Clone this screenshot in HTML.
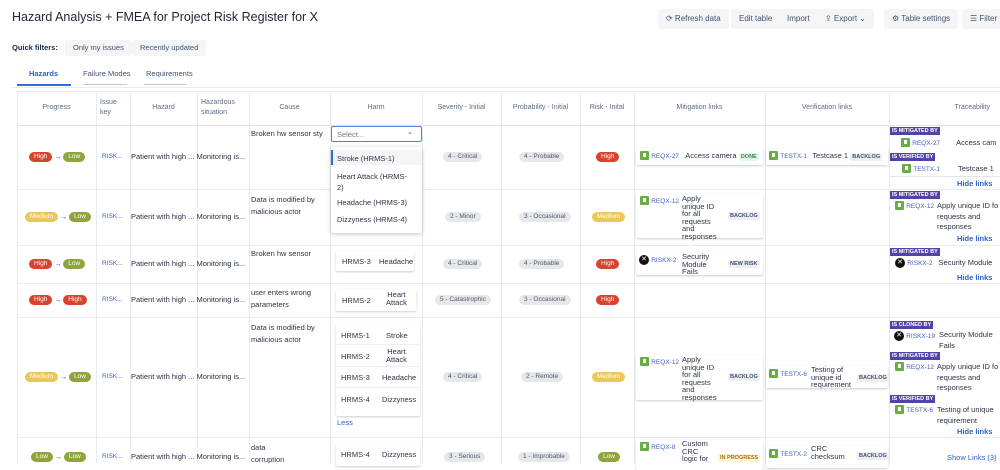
<!DOCTYPE html><html><head><style>
*{box-sizing:border-box;margin:0;padding:0}
body{width:1000px;height:463px;overflow:hidden;background:#fff;font-family:"Liberation Sans",sans-serif;color:#172b4d;position:relative;font-size:8px;line-height:1.25}
.a{position:absolute;white-space:nowrap}
.vl{position:absolute;top:91px;bottom:0;width:1px;background:#e8eaee}
.hl{position:absolute;left:17px;right:0;height:1px;background:#e8eaee}
.btn{position:absolute;top:9px;height:20px;background:#f4f5f7;border-radius:3px;font-size:8px;color:#42526e;line-height:20px;padding:0 8px;white-space:nowrap}
.th{position:absolute;top:91px;height:34px;font-size:7px;color:#5e6c84;display:flex;align-items:center;justify-content:center;text-align:center;line-height:10px}
.pp{line-height:10px;font-size:7px}
.p{display:inline-block;border-radius:8px;font-size:6.5px;color:#fff;padding:0 5px;height:10px;line-height:10px;vertical-align:middle}
.H{background:#d8432e}.L{background:#8ea53b}.M{background:#e9c75c}
.g{position:absolute;background:#e5e7eb;color:#505866;font-size:6.5px;border-radius:6px;height:10px;line-height:10px;padding:0 5px;white-space:nowrap}
.t{font-size:7.5px;color:#2b3445}
.k{font-size:6.5px;color:#3d62c4}
.card{position:absolute;background:#fff;box-shadow:0 1px 2px rgba(0,0,0,.2);border-radius:2px}
.ic{display:inline-block;width:9px;height:9px;background:#6bad45;border-radius:1px;vertical-align:middle;position:relative}
.ic:after{content:"";position:absolute;left:3px;top:2px;width:3px;height:4px;background:#fff}
.ix{display:inline-block;width:10px;height:10px;background:#111;border-radius:50%;vertical-align:middle;color:#fff;font-size:7px;text-align:center;line-height:10px}
.st{font-size:5.5px;font-weight:bold;color:#42526e;background:#eceef1;padding:1px 2px;border-radius:2px}
.lab{position:absolute;background:#5243aa;color:#fff;font-size:5.5px;font-weight:bold;padding:0 2px;height:8px;line-height:8px;white-space:nowrap}
.hide{position:absolute;font-size:7.5px;color:#2d5fc7;font-weight:bold;white-space:nowrap}
</style></head><body>
<div class="a" style="left:12px;top:10px;font-size:12.5px;color:#1d2536">Hazard Analysis + FMEA for Project Risk Register for X</div>
<div class="btn" style="left:658px">⟳ Refresh data</div>
<div class="btn" style="left:731px">Edit table</div>
<div class="btn" style="left:779px">Import</div>
<div class="btn" style="left:817px">⇪ Export ⌄</div>
<div class="btn" style="left:884px">⚙ Table settings</div>
<div class="btn" style="left:962px">☰ Filter</div>
<div class="a" style="left:12px;top:43px;font-size:7.5px;font-weight:bold;color:#172b4d">Quick filters:</div>
<div class="btn" style="left:65px;top:40px;height:16px;line-height:16px;font-size:7.5px">Only my issues</div>
<div class="btn" style="left:132px;top:40px;height:16px;line-height:16px;font-size:7.5px">Recently updated</div>
<div class="a" style="left:29px;top:69px;font-size:7.5px;color:#2d5fc7;font-weight:bold">Hazards</div>
<div class="a" style="left:17px;top:84px;width:54px;height:2px;background:#2d6fe0"></div>
<div class="a" style="left:83px;top:69px;font-size:7.5px;color:#42526e">Failure Modes</div>
<div class="a" style="left:83px;top:84px;width:44px;height:1px;background:#c5cbd6"></div>
<div class="a" style="left:146px;top:69px;font-size:7.5px;color:#42526e">Requirements</div>
<div class="a" style="left:144px;top:84px;width:43px;height:1px;background:#c5cbd6"></div>
<div class="a" style="left:12px;top:87px;right:0;height:1px;background:#ebecf0"></div>

<div class="hl" style="top:91px"></div><div class="hl" style="top:125px;background:#dfe1e6"></div><div class="hl" style="top:189px"></div><div class="hl" style="top:245px"></div><div class="hl" style="top:283px"></div><div class="hl" style="top:317px"></div><div class="hl" style="top:437px"></div>
<div class="vl" style="left:17px"></div><div class="vl" style="left:96px"></div><div class="vl" style="left:130px"></div><div class="vl" style="left:197px"></div><div class="vl" style="left:249px"></div><div class="vl" style="left:330px"></div><div class="vl" style="left:422px"></div><div class="vl" style="left:501px"></div><div class="vl" style="left:580px"></div><div class="vl" style="left:634px"></div><div class="vl" style="left:765px"></div><div class="vl" style="left:889px"></div>

<div class="th" style="left:17px;width:79px">Progress</div>
<div class="th" style="left:96px;width:34px;justify-content:flex-start;padding-left:4px;text-align:left">Issue<br>key</div>
<div class="th" style="left:130px;width:67px">Hazard</div>
<div class="th" style="left:197px;width:52px;justify-content:flex-start;padding-left:4px;text-align:left">Hazardous<br>situation</div>
<div class="th" style="left:249px;width:81px">Cause</div>
<div class="th" style="left:330px;width:92px">Harm</div>
<div class="th" style="left:422px;width:79px">Severity - Initial</div>
<div class="th" style="left:501px;width:79px">Probability - Initial</div>
<div class="th" style="left:580px;width:54px">Risk - Inital</div>
<div class="th" style="left:634px;width:131px">Mitigation links</div>
<div class="th" style="left:765px;width:124px">Verification links</div>
<div class="th" style="left:889px;width:111px;justify-content:flex-end;padding-right:10px">Traceability</div>

<div class="a pp" style="left:29px;top:152px"><span class="p H">High</span> → <span class="p L">Low</span></div>
<div class="a pp" style="left:25px;top:212px"><span class="p M">Medium</span> → <span class="p L">Low</span></div>
<div class="a pp" style="left:29px;top:259px"><span class="p H">High</span> → <span class="p L">Low</span></div>
<div class="a pp" style="left:29px;top:295px"><span class="p H">High</span> → <span class="p H">High</span></div>
<div class="a pp" style="left:25px;top:372px"><span class="p M">Medium</span> → <span class="p L">Low</span></div>
<div class="a pp" style="left:31px;top:452px"><span class="p L">Low</span> → <span class="p L">Low</span></div>

<div class="a k" style="left:102px;top:153px">RISK...</div><div class="a k" style="left:102px;top:213px">RISK...</div><div class="a k" style="left:102px;top:260px">RISK...</div><div class="a k" style="left:102px;top:296px">RISK...</div><div class="a k" style="left:102px;top:373px">RISK...</div><div class="a k" style="left:102px;top:453px">RISK...</div>
<div class="a t" style="left:131px;top:152px">Patient with high ... Monitoring is...</div>
<div class="a t" style="left:131px;top:212px">Patient with high ... Monitoring is...</div>
<div class="a t" style="left:131px;top:259px">Patient with high ... Monitoring is...</div>
<div class="a t" style="left:131px;top:295px">Patient with high ... Monitoring is...</div>
<div class="a t" style="left:131px;top:372px">Patient with high ... Monitoring is...</div>
<div class="a t" style="left:131px;top:452px">Patient with high ... Monitoring is...</div>

<div class="a t" style="left:251px;top:129px">Broken hw sensor sty</div>
<div class="a t" style="left:251px;top:194px;line-height:12px">Data is modified by<br>malicious actor</div>
<div class="a t" style="left:251px;top:249px">Broken hw sensor</div>
<div class="a t" style="left:251px;top:287px;line-height:12px">user enters wrong<br>parameters</div>
<div class="a t" style="left:251px;top:322px;line-height:12px">Data is modified by<br>malicious actor</div>
<div class="a t" style="left:251px;top:442px;line-height:12px">data<br>corruption</div>

<div class="card" style="left:336px;top:251px;width:78px;height:20px"><div class="a t" style="left:6px;top:6px">HRMS-3</div><div class="a t" style="left:43px;top:6px">Headache</div></div>
<div class="card" style="left:336px;top:289px;width:80px;height:22px"><div class="a t" style="left:6px;top:7px">HRMS-2</div><div class="a t" style="left:50px;top:2px;text-align:center;line-height:8px">Heart<br>Attack</div></div>
<div class="card" style="left:336px;top:324px;width:84px;height:92px">
<div class="a t" style="left:5px;top:7px">HRMS-1</div><div class="a t" style="left:50px;top:7px">Stroke</div>
<div class="a" style="left:0;right:0;top:20px;height:1px;background:#eee"></div>
<div class="a t" style="left:5px;top:28px">HRMS-2</div><div class="a t" style="left:50px;top:24px;text-align:center;line-height:8px">Heart<br>Attack</div>
<div class="a" style="left:0;right:0;top:42px;height:1px;background:#eee"></div>
<div class="a t" style="left:5px;top:49px">HRMS-3</div><div class="a t" style="left:46px;top:49px">Headache</div>
<div class="a" style="left:0;right:0;top:63px;height:1px;background:#eee"></div>
<div class="a t" style="left:5px;top:71px">HRMS-4</div><div class="a t" style="left:46px;top:71px">Dizzyness</div></div>
<div class="a" style="left:337px;top:418px;font-size:7.5px;color:#2d5fc7">Less</div>
<div class="card" style="left:336px;top:444px;width:84px;height:22px"><div class="a t" style="left:5px;top:6px">HRMS-4</div><div class="a t" style="left:46px;top:6px">Dizzyness</div></div>

<div class="a" style="left:331px;top:126px;width:91px;height:16px;border:1px solid #4c86e0;border-radius:2px;background:#fff"><span class="a" style="left:5px;top:3px;font-size:7.5px;color:#6b778c">Select...</span><span class="a" style="right:8px;top:2px;font-size:7px;color:#42526e">⌄</span></div>
<div class="card" style="left:331px;top:147px;width:91px;height:86px;box-shadow:0 1px 4px rgba(0,0,0,.25)">
<div class="a" style="left:0;top:3px;width:91px;height:15px;background:#f4f5f7;border-left:2px solid #2d6fe0"></div>
<div class="a t" style="left:6px;top:7px">Stroke (HRMS-1)</div>
<div class="a t" style="left:6px;top:24px;line-height:11px">Heart Attack (HRMS-<br>2)</div>
<div class="a t" style="left:6px;top:51px">Headache (HRMS-3)</div>
<div class="a t" style="left:6px;top:68px">Dizzyness (HRMS-4)</div></div>

<div class="g" style="left:443px;top:152px">4 - Critical</div><div class="g" style="left:519px;top:152px">4 - Probable</div><div class="a pp" style="left:596px;top:152px"><span class="p H">High</span></div>
<div class="g" style="left:445px;top:212px">2 - Minor</div><div class="g" style="left:519px;top:212px">3 - Occasional</div><div class="a pp" style="left:592px;top:212px"><span class="p M">Medium</span></div>
<div class="g" style="left:443px;top:259px">4 - Critical</div><div class="g" style="left:519px;top:259px">4 - Probable</div><div class="a pp" style="left:596px;top:259px"><span class="p H">High</span></div>
<div class="g" style="left:435px;top:295px">5 - Catastrophic</div><div class="g" style="left:519px;top:295px">3 - Occasional</div><div class="a pp" style="left:596px;top:295px"><span class="p H">High</span></div>
<div class="g" style="left:443px;top:372px">4 - Critical</div><div class="g" style="left:521px;top:372px">2 - Remote</div><div class="a pp" style="left:592px;top:372px"><span class="p M">Medium</span></div>
<div class="g" style="left:444px;top:452px">3 - Serious</div><div class="g" style="left:518px;top:452px">1 - Improbable</div><div class="a pp" style="left:598px;top:452px"><span class="p L">Low</span></div>

<div class="card" style="left:636px;top:148px;width:127px;height:17px"><div class="a" style="left:4px;top:3px"><span class="ic"></span> <span class="k">REQX-27</span> <span class="t" style="margin-left:4px">Access camera</span> <span class="st" style="color:#2e8a4e;background:#e3f5ea">DONE</span></div></div>
<div class="card" style="left:636px;top:194px;width:127px;height:44px"><div class="a" style="left:4px;top:2px"><span class="ic"></span> <span class="k">REQX-12</span></div><div class="a t" style="left:46px;top:1px;line-height:7.5px">Apply<br>unique ID<br>for all<br>requests<br>and<br>responses</div><div class="a" style="left:92px;top:16px"><span class="st">BACKLOG</span></div></div>
<div class="card" style="left:636px;top:253px;width:127px;height:22px"><div class="a" style="left:3px;top:2px"><span class="ix">✕</span> <span class="k">RISKX-2</span></div><div class="a t" style="left:46px;top:0;line-height:7.5px">Security<br>Module<br>Fails</div><div class="a" style="left:92px;top:5px"><span class="st">NEW RISK</span></div></div>
<div class="card" style="left:636px;top:355px;width:127px;height:45px"><div class="a" style="left:4px;top:2px"><span class="ic"></span> <span class="k">REQX-12</span></div><div class="a t" style="left:46px;top:1px;line-height:7.5px">Apply<br>unique ID<br>for all<br>requests<br>and<br>responses</div><div class="a" style="left:92px;top:16px"><span class="st">BACKLOG</span></div></div>
<div class="card" style="left:636px;top:440px;width:127px;height:30px"><div class="a" style="left:4px;top:2px"><span class="ic"></span> <span class="k">REQX-8</span></div><div class="a t" style="left:46px;top:0;line-height:7.5px">Custom<br>CRC<br>logic for</div><div class="a" style="left:82px;top:12px"><span class="st" style="color:#a5710b;background:#fff4d6">IN PROGRESS</span></div></div>

<div class="card" style="left:766px;top:148px;width:122px;height:17px"><div class="a" style="left:3px;top:3px"><span class="ic"></span> <span class="k">TESTX-1</span> <span class="t" style="margin-left:3px">Testcase 1</span> <span class="st">BACKLOG</span></div></div>
<div class="card" style="left:766px;top:366px;width:122px;height:22px"><div class="a" style="left:3px;top:3px"><span class="ic"></span> <span class="k">TESTX-6</span></div><div class="a t" style="left:45px;top:0;line-height:7.5px">Testing of<br>unique id<br>requirement</div><div class="a" style="left:91px;top:6px"><span class="st">BACKLOG</span></div></div>
<div class="card" style="left:766px;top:446px;width:122px;height:22px"><div class="a" style="left:3px;top:3px"><span class="ic"></span> <span class="k">TESTX-2</span></div><div class="a t" style="left:45px;top:-1px;line-height:7.5px">CRC<br>checksum</div><div class="a" style="left:91px;top:4px"><span class="st">BACKLOG</span></div></div>

<div class="lab" style="left:890px;top:127px">IS MITIGATED BY</div>
<div class="a" style="left:901px;top:138px"><span class="ic"></span> <span class="k">REQX-27</span><span class="t" style="margin-left:16px">Access cam</span></div>
<div class="lab" style="left:890px;top:153px">IS VERIFIED BY</div>
<div class="a" style="left:902px;top:164px"><span class="ic"></span> <span class="k">TESTX-1</span><span class="t" style="margin-left:18px">Testcase 1</span></div>
<div class="a" style="left:890px;top:176px;width:110px;height:1px;background:#e3e5ea"></div>
<div class="hide" style="left:957px;top:179px">Hide links</div>
<div class="lab" style="left:890px;top:191px">IS MITIGATED BY</div>
<div class="a" style="left:895px;top:201px"><span class="ic"></span> <span class="k">REQX-12</span></div>
<div class="a t" style="left:937px;top:201px;line-height:10.5px">Apply unique ID fo<br>requests and<br>responses</div>
<div class="hide" style="left:957px;top:234px">Hide links</div>
<div class="lab" style="left:890px;top:248px">IS MITIGATED BY</div>
<div class="a" style="left:895px;top:258px"><span class="ix">✕</span> <span class="k">RISKX-2</span><span class="t" style="margin-left:6px">Security Module</span></div>
<div class="hide" style="left:957px;top:273px">Hide links</div>
<div class="lab" style="left:890px;top:321px">IS CLONED BY</div>
<div class="a" style="left:894px;top:331px"><span class="ix">✕</span> <span class="k">RISKX-19</span></div>
<div class="a t" style="left:939px;top:330px;line-height:10.5px">Security Module<br>Fails</div>
<div class="lab" style="left:890px;top:352px">IS MITIGATED BY</div>
<div class="a" style="left:895px;top:362px"><span class="ic"></span> <span class="k">REQX-12</span></div>
<div class="a t" style="left:937px;top:362px;line-height:10.5px">Apply unique ID fo<br>requests and<br>responses</div>
<div class="lab" style="left:890px;top:395px">IS VERIFIED BY</div>
<div class="a" style="left:895px;top:405px"><span class="ic"></span> <span class="k">TESTX-6</span></div>
<div class="a t" style="left:937px;top:405px;line-height:10.5px">Testing of unique<br>requirement</div>
<div class="hide" style="left:957px;top:427px">Hide links</div>
<div class="hide" style="left:947px;top:453px;font-weight:normal">Show Links (3)</div>
</body></html>
